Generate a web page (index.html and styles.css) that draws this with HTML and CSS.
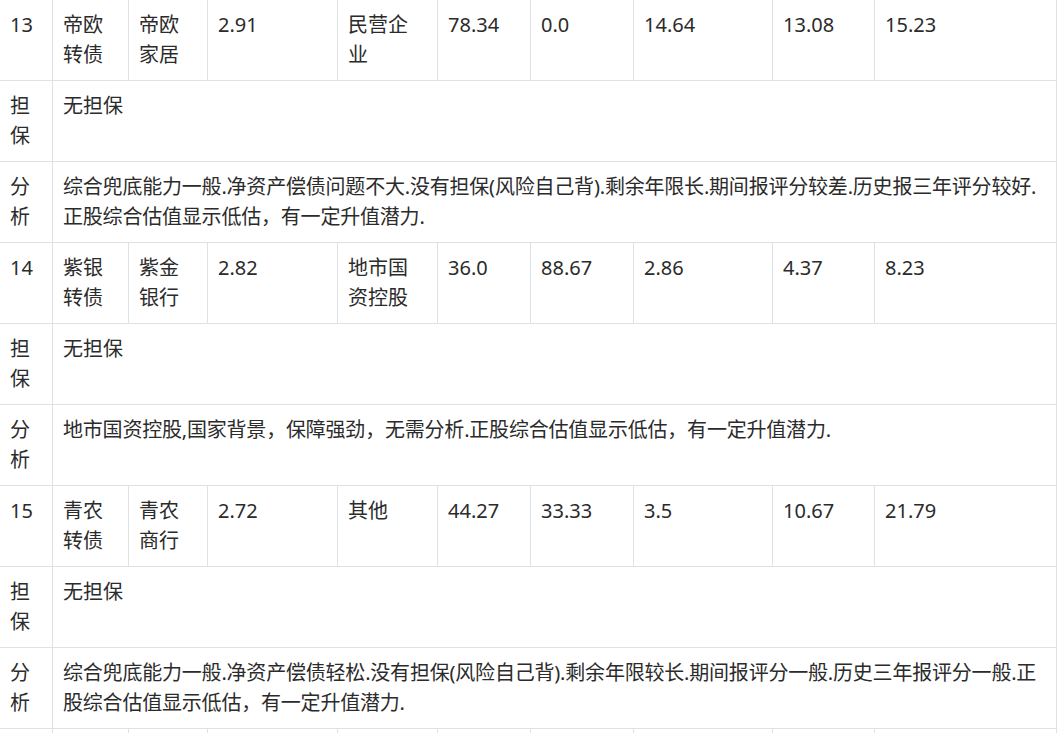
FILE: index.html
```html
<!DOCTYPE html>
<html lang="zh-CN">
<head>
<meta charset="utf-8">
<title>可转债分析</title>
<link rel="stylesheet" href="styles.css">
</head>
<body>
<div class="viewport">
<table class="bonds">
  <colgroup>
    <col class="c1"><col class="c2"><col class="c3"><col class="c4"><col class="c5">
    <col class="c6"><col class="c7"><col class="c8"><col class="c9"><col class="c10">
  </colgroup>
  <tbody>
    <tr>
      <td>13</td><td>帝欧转债</td><td>帝欧家居</td><td>2.91</td><td>民营企业</td>
      <td>78.34</td><td>0.0</td><td>14.64</td><td>13.08</td><td>15.23</td>
    </tr>
    <tr>
      <td>担保</td><td colspan="9">无担保</td>
    </tr>
    <tr>
      <td>分析</td><td class="note" colspan="9">综合兜底能力一般.净资产偿债问题不大.没有担保(风险自己背).剩余年限长.期间报评分较差.历史报三年评分较好.正股综合估值显示低估，有一定升值潜力.</td>
    </tr>
    <tr>
      <td>14</td><td>紫银转债</td><td>紫金银行</td><td>2.82</td><td>地市国资控股</td>
      <td>36.0</td><td>88.67</td><td>2.86</td><td>4.37</td><td>8.23</td>
    </tr>
    <tr>
      <td>担保</td><td colspan="9">无担保</td>
    </tr>
    <tr>
      <td>分析</td><td class="note" colspan="9">地市国资控股,国家背景，保障强劲，无需分析.正股综合估值显示低估，有一定升值潜力.</td>
    </tr>
    <tr>
      <td>15</td><td>青农转债</td><td>青农商行</td><td>2.72</td><td>其他</td>
      <td>44.27</td><td>33.33</td><td>3.5</td><td>10.67</td><td>21.79</td>
    </tr>
    <tr>
      <td>担保</td><td colspan="9">无担保</td>
    </tr>
    <tr>
      <td>分析</td><td class="note" colspan="9">综合兜底能力一般.净资产偿债轻松.没有担保(风险自己背).剩余年限较长.期间报评分一般.历史三年报评分一般.正股综合估值显示低估，有一定升值潜力.</td>
    </tr>
    <tr class="next">
      <td></td><td></td><td></td><td></td><td></td><td></td><td></td><td></td><td></td><td></td>
    </tr>
  </tbody>
</table>
</div>
</body>
</html>
```
FILE: styles.css
```css
html, body {
  margin: 0;
  padding: 0;
  background: #ffffff;
}

.viewport {
  width: 1062px;
  height: 733px;
  overflow: hidden;
}

.bonds {
  margin: -1px 0 0 -1px;
  width: 1058px;
  table-layout: fixed;
  border-collapse: collapse;
  font-family: "Noto Sans", "Noto Sans CJK SC", sans-serif;
  font-size: 20px;
  line-height: 30px;
  color: #2b2b2b;
}

.bonds td {
  border: 1px solid #dfe2e5;
  padding: 10px 10px;
  vertical-align: top;
  text-align: left;
  word-break: break-all;
  height: 60px;
}

.bonds td.note {
  letter-spacing: -0.2px;
}

.c1 { width: 53px; }
.c2 { width: 76px; }
.c3 { width: 79px; }
.c4 { width: 130px; }
.c5 { width: 100px; }
.c6 { width: 93px; }
.c7 { width: 103px; }
.c8 { width: 139px; }
.c9 { width: 102px; }
.c10 { width: 182px; }
```
